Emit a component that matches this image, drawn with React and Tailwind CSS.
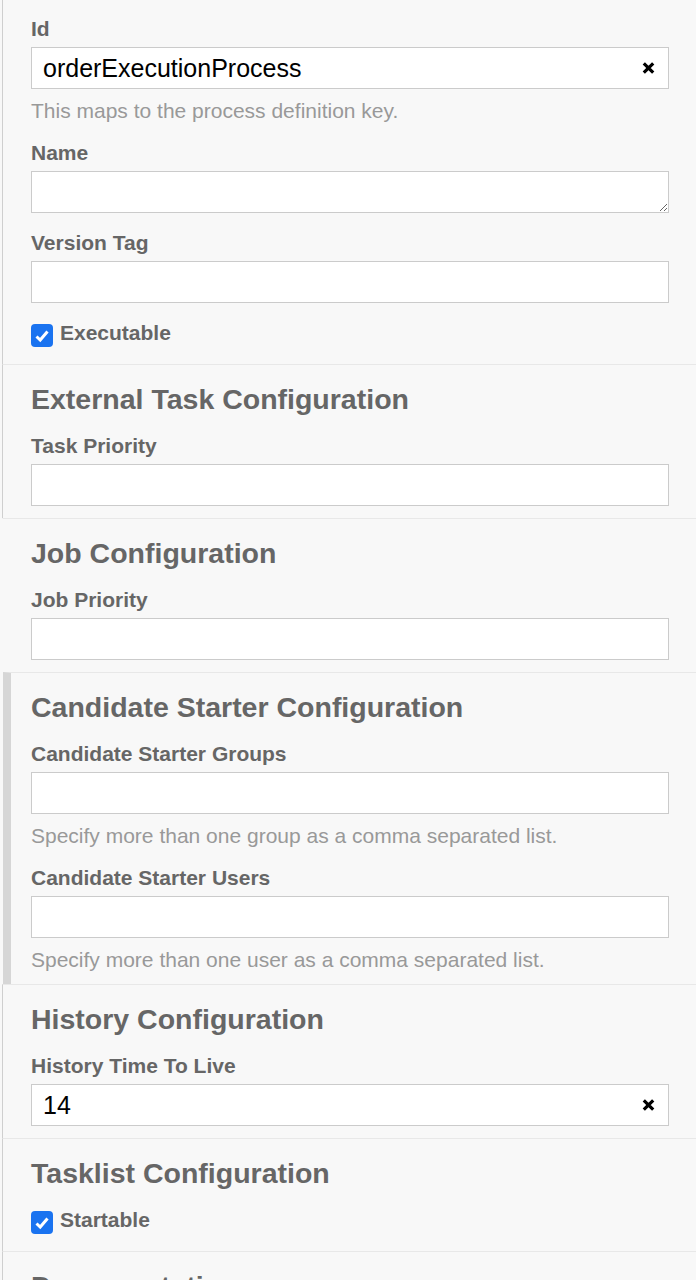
import React from "react";

const ClearButton = () => (
  <button
    type="button"
    className="absolute right-[14px] top-1/2 -translate-y-1/2 flex items-center justify-center"
  >
    <svg width="13" height="13" viewBox="0 0 13 13">
      <path d="M1.8 1.8 L11.2 11.2 M11.2 1.8 L1.8 11.2" stroke="#000" strokeWidth="3.2" />
    </svg>
  </button>
);

const Field = ({ label, value, description, clearable, multiline }) => (
  <div>
    <label className="block text-[21px] leading-[24px] font-bold text-[#666] mb-[6px]">{label}</label>
    <div className="relative">
      {multiline ? (
        <textarea
          rows={1}
          defaultValue={value}
          className="block w-full h-[42px] border border-[#cbcbcb] bg-white px-[11px] text-[25px] text-black outline-none resize-y"
        />
      ) : (
        <input
          type="text"
          defaultValue={value}
          className="block w-full h-[42px] border border-[#cbcbcb] bg-white pl-[11px] pr-[40px] text-[25px] text-black outline-none"
        />
      )}
      {clearable && <ClearButton />}
    </div>
    {description && (
      <div className="mt-[10px] text-[21px] leading-[24px] text-[#999]">{description}</div>
    )}
  </div>
);

const Checkbox = ({ label }) => (
  <div className="flex items-start gap-[7px] mb-[5px]">
    <span className="mt-[3px] w-[22px] h-[23px] rounded-[4px] bg-[#1a73f0] flex items-center justify-center">
      <svg width="18" height="18" viewBox="0 0 18 18">
        <path d="M3.5 9.5 L7.2 13 L14.5 4.5" fill="none" stroke="#fff" strokeWidth="3" />
      </svg>
    </span>
    <span className="text-[21px] leading-[24px] font-bold text-[#666]">{label}</span>
  </div>
);

const Section = ({ title, edge = "line", children }) => {
  const edges = {
    line: "ml-[2px] border-l border-l-[#cfcfcf] pl-[28px]",
    none: "ml-[2px] border-l border-l-transparent pl-[28px]",
    bar: "ml-[3px] border-l-[8px] border-l-[#d6d6d6] pl-[20px]",
  };
  return (
    <div className={`border-t border-t-[#e8e8e8] pr-[27px] pt-[18px] pb-[12px] ${edges[edge]}`}>
      {title && (
        <h3 className="text-[28.5px] leading-[32px] font-bold text-[#666] mb-[19px]">{title}</h3>
      )}
      <div className="flex flex-col gap-[18px]">{children}</div>
    </div>
  );
};

export default function App() {
  return (
    <div className="min-h-screen bg-[#f8f8f8] font-['Liberation_Sans',Arial,sans-serif] overflow-hidden">
      {/* General */}
      <div className="ml-[2px] border-l border-l-[#cfcfcf] pl-[28px] pr-[27px] pt-[17px] pb-[12px]">
        <div className="flex flex-col gap-[18px]">
          <Field
            label="Id"
            value="orderExecutionProcess"
            description="This maps to the process definition key."
            clearable
          />
          <Field label="Name" value="" multiline />
          <Field label="Version Tag" value="" />
          <Checkbox label="Executable" />
        </div>
      </div>

      <Section title="External Task Configuration">
        <Field label="Task Priority" value="" />
      </Section>

      <Section title="Job Configuration" edge="none">
        <Field label="Job Priority" value="" />
      </Section>

      <Section title="Candidate Starter Configuration" edge="bar">
        <Field
          label="Candidate Starter Groups"
          value=""
          description="Specify more than one group as a comma separated list."
        />
        <Field
          label="Candidate Starter Users"
          value=""
          description="Specify more than one user as a comma separated list."
        />
      </Section>

      <Section title="History Configuration">
        <Field label="History Time To Live" value="14" clearable />
      </Section>

      <Section title="Tasklist Configuration">
        <Checkbox label="Startable" />
      </Section>

      <Section title="Documentation">
        <Field label="Element Documentation" value="" multiline />
      </Section>
    </div>
  );
}
